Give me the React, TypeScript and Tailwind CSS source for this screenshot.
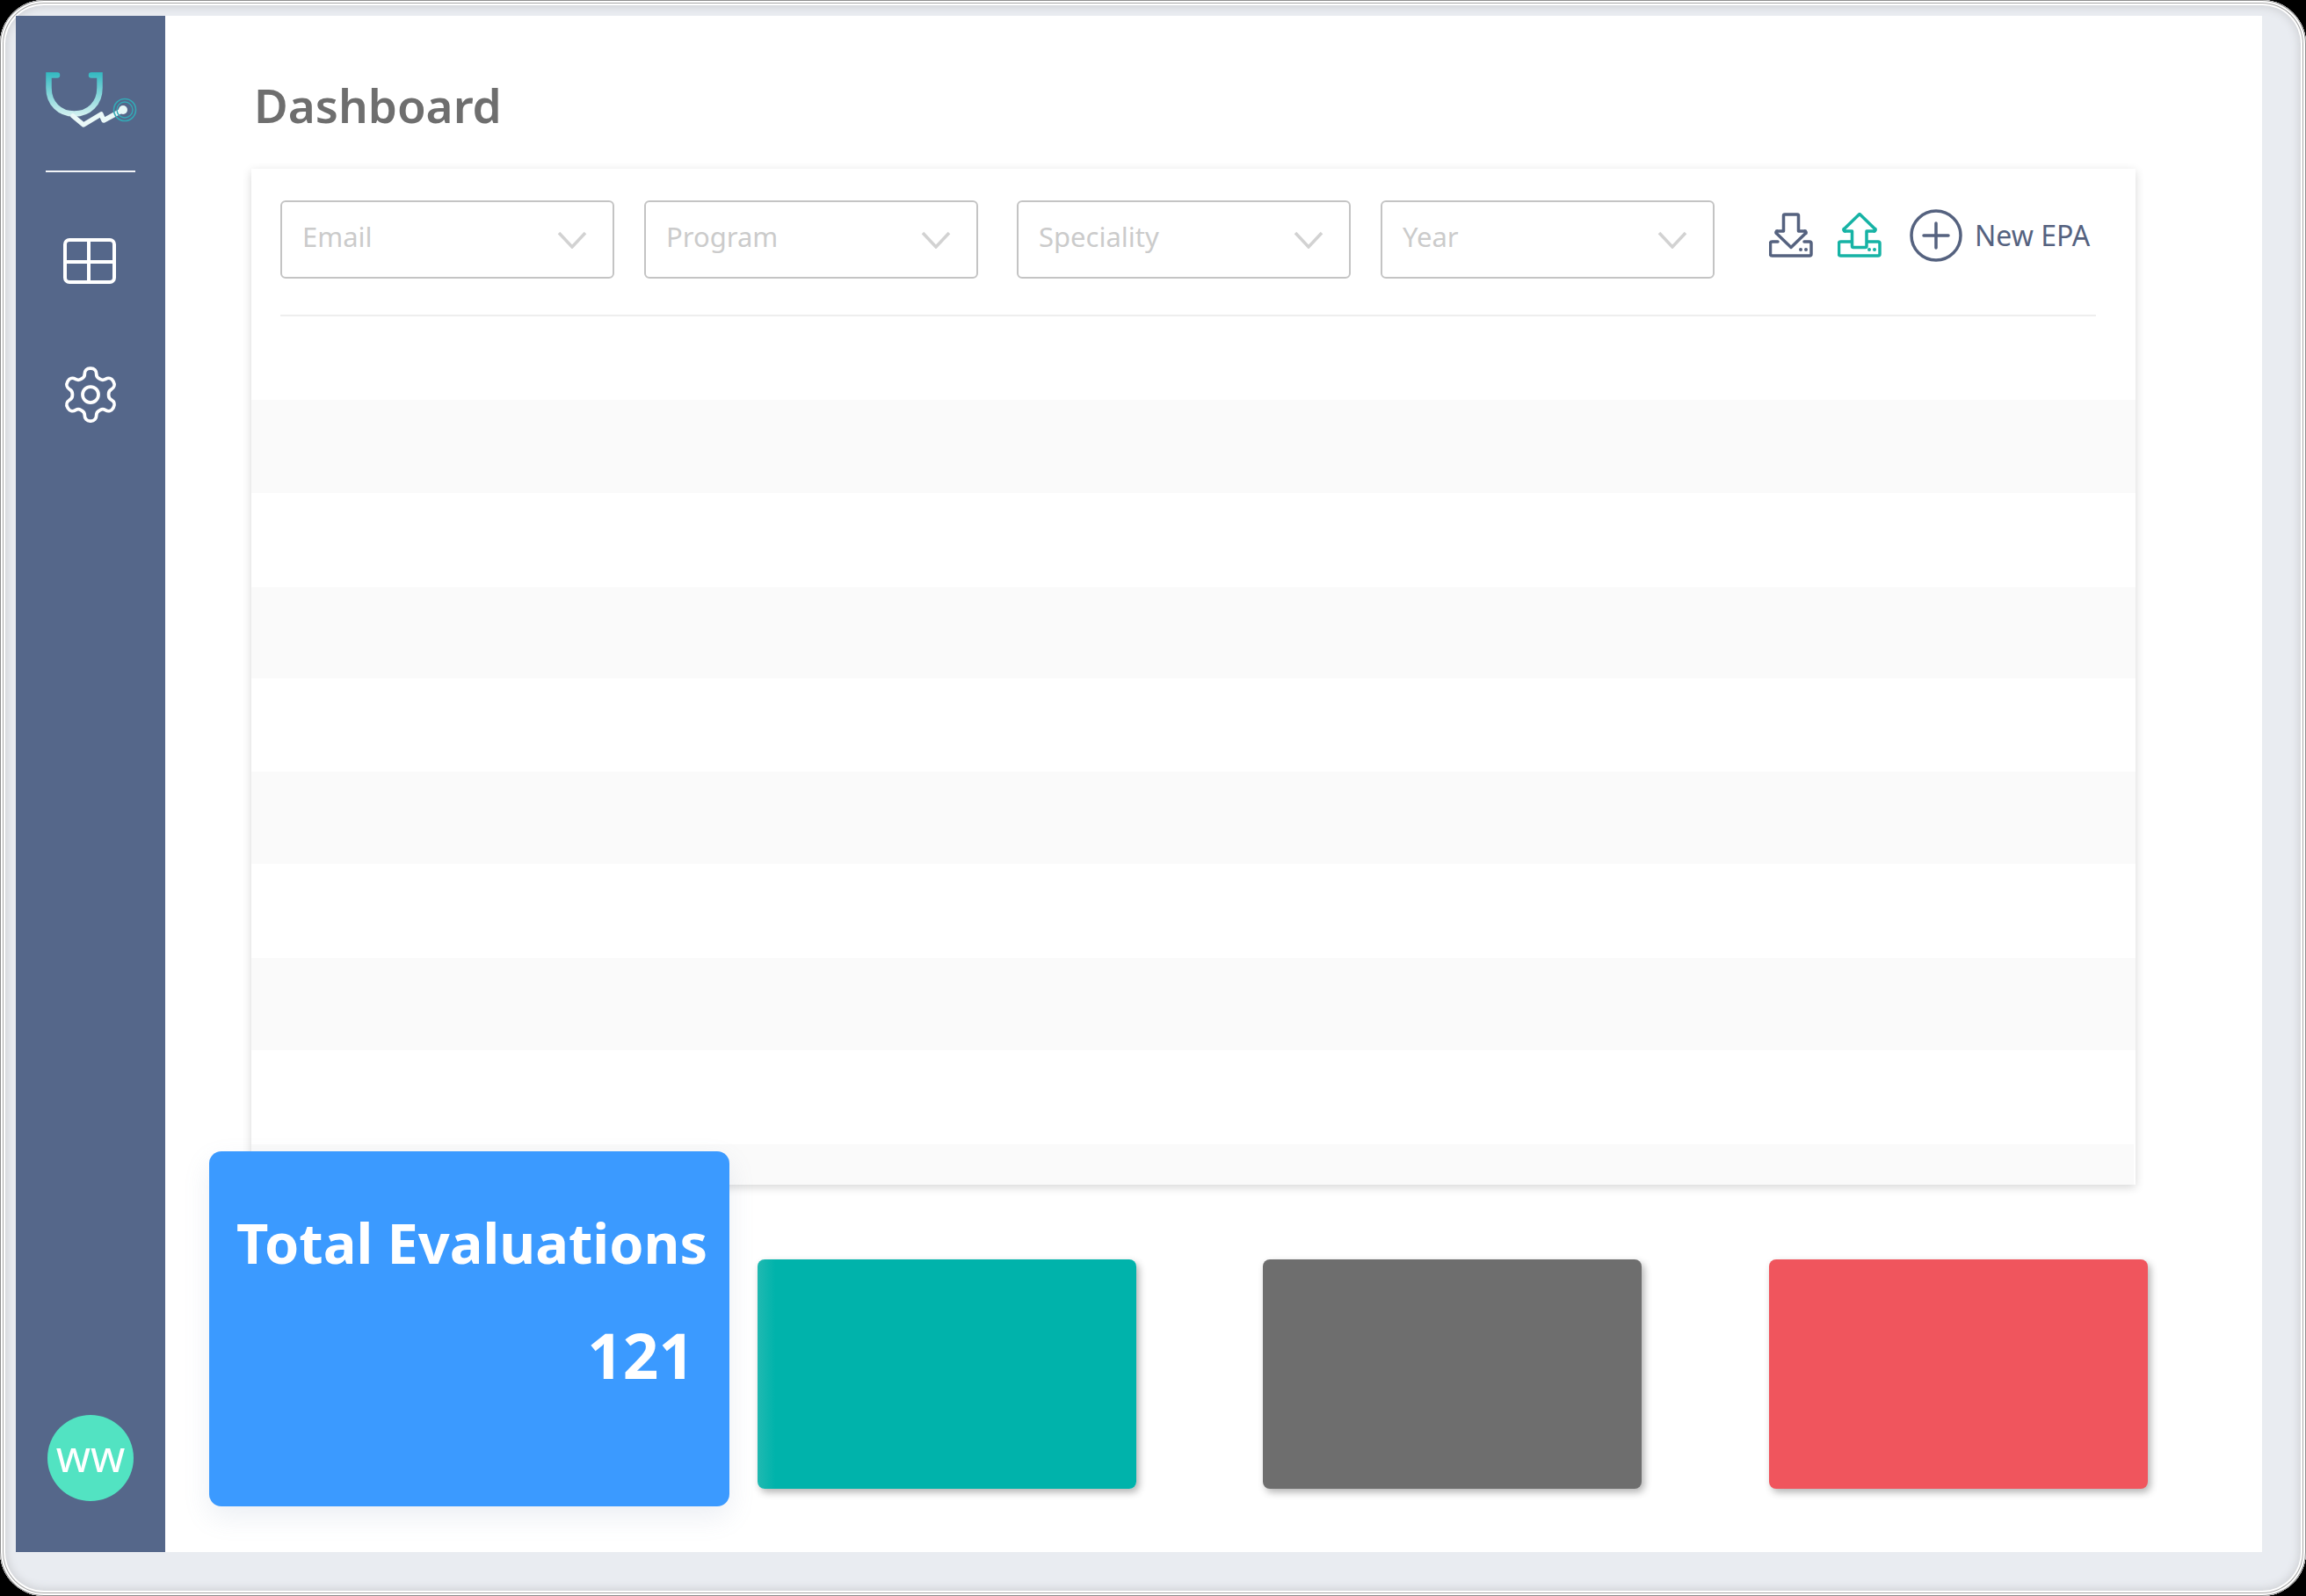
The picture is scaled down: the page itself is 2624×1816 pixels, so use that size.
const font = { fontFamily: '"Noto Sans", sans-serif' };

function Select({ label, className }: { label: string; className: string }) {
  return (
    <div className={`flex h-[89px] w-[380px] items-center justify-between rounded-[6px] border-2 border-[#c4c4c4] bg-white pl-[23px] pr-[29px] ${className}`}>
      <span className="text-[31px] leading-none text-[#cbcbcb] -mt-[6px]">{label}</span>
      <svg width="34" height="20" viewBox="0 0 34 20" fill="none" stroke="#d2d2d2" strokeWidth="3.5"><path d="M2 2 L17 18 L32 2" /></svg>
    </div>
  );
}

function Tray({ color, up }: { color: string; up?: boolean }) {
  return (
    <svg width="50" height="51" viewBox="0 0 50 51" fill="none" stroke={color} strokeWidth="3.5" strokeLinejoin="round" strokeLinecap="round">
      {up ? (
        <>
          <path d="M15 33 H3.5 a2 2 0 0 0 -2 2 V47 a2 2 0 0 0 2 2 H46 a2 2 0 0 0 2 -2 V35 a2 2 0 0 0 -2 -2 H34" />
          <path d="M25 1.5 L42 18 a1.5 1.5 0 0 1 -1 3 H33 V38 a1.5 1.5 0 0 1 -1.5 1.5 H18 a1.5 1.5 0 0 1 -1.5 -1.5 V21 H9 a1.5 1.5 0 0 1 -1 -3 Z" />
        </>
      ) : (
        <>
          <path d="M10 33 H3.5 a2 2 0 0 0 -2 2 V47 a2 2 0 0 0 2 2 H46 a2 2 0 0 0 2 -2 V35 a2 2 0 0 0 -2 -2 H40" />
          <path d="M18 2 H32 a1.5 1.5 0 0 1 1.5 1.5 V21 H40 a1.5 1.5 0 0 1 1 3 L25 39.5 L9 24 a1.5 1.5 0 0 1 1 -3 H16.5 V3.5 A1.5 1.5 0 0 1 18 2 Z" />
        </>
      )}
      <circle cx="36" cy="42" r="2" fill={color} stroke="none" />
      <circle cx="42" cy="42" r="2" fill={color} stroke="none" />
    </svg>
  );
}

function Logo() {
  return (
    <svg width="106" height="66" viewBox="0 0 106 66" fill="none">
      <defs>
        <linearGradient id="lc" gradientUnits="userSpaceOnUse" x1="0" y1="0" x2="0" y2="56">
          <stop offset="0" stopColor="#31b8c0" />
          <stop offset="1" stopColor="#e8f8f7" />
        </linearGradient>
      </defs>
      <path d="M13 3.5 H3.5 V18 C3.5 36 16 47.5 32.5 47.5 C49 47.5 61.5 36 61.5 18 V3.5 H52" stroke="url(#lc)" strokeWidth="6.5" strokeLinecap="round" />
      <path d="M31 50 L43 60 L63 48 L66 55 L88 43" stroke="#eaf8f8" strokeWidth="5.5" strokeLinejoin="round" strokeLinecap="round" />
      <circle cx="90" cy="43" r="12.5" stroke="#34a9b6" strokeWidth="1.6" />
      <circle cx="90" cy="43" r="9" stroke="#34a9b6" strokeWidth="1.4" />
      <circle cx="88" cy="43" r="5" fill="#e8f8f7" />
    </svg>
  );
}

export default function App() {
  const rows = [95, 106, 107, 104, 106, 105, 107, 105, 107, 46];
  return (
    <div className="h-[1816px] w-[2624px] overflow-hidden bg-black" style={font}>
      <div className="flex h-full w-full rounded-[50px] bg-[#e9ecf1] pb-[50px] pl-[18px] pr-[50px] pt-[18px] shadow-[inset_0_0_0_1px_#8f8f8f,inset_0_0_0_3px_#ffffff,inset_0_0_0_4px_#a8a8a8,inset_0_0_0_6px_#ffffff,inset_0_0_8px_9px_#d3d5d9]">
        <aside className="flex w-[170px] shrink-0 flex-col items-center bg-[#55678a]">
          <div className="mt-[64px] ml-[4px] h-[66px]"><Logo /></div>
          <div className="mt-[46px] h-[2px] w-[102px] bg-[#f2f4f7]" />
          <svg className="mt-[75px] -ml-[2px]" width="60" height="52" viewBox="0 0 60 52" fill="none" stroke="#ffffff" strokeWidth="4">
            <rect x="2" y="2" width="56" height="48" rx="5" />
            <path d="M29 2 V50 M2 27 H58" />
          </svg>
          <svg className="mt-[90px]" width="72" height="72" viewBox="0 0 24 24" fill="none" stroke="#ffffff" strokeWidth="1.25" strokeLinecap="round" strokeLinejoin="round">
            <path d="M12.22 2h-.44a2 2 0 0 0-2 2v.18a2 2 0 0 1-1 1.73l-.43.25a2 2 0 0 1-2 0l-.15-.08a2 2 0 0 0-2.73.73l-.22.38a2 2 0 0 0 .73 2.73l.15.1a2 2 0 0 1 1 1.72v.51a2 2 0 0 1-1 1.74l-.15.09a2 2 0 0 0-.73 2.73l.22.38a2 2 0 0 0 2.73.73l.15-.08a2 2 0 0 1 2 0l.43.25a2 2 0 0 1 1 1.73V20a2 2 0 0 0 2 2h.44a2 2 0 0 0 2-2v-.18a2 2 0 0 1 1-1.73l.43-.25a2 2 0 0 1 2 0l.15.08a2 2 0 0 0 2.73-.73l.22-.39a2 2 0 0 0-.73-2.73l-.15-.08a2 2 0 0 1-1-1.74v-.5a2 2 0 0 1 1-1.74l.15-.09a2 2 0 0 0 .73-2.73l-.22-.38a2 2 0 0 0-2.73-.73l-.15.08a2 2 0 0 1-2 0l-.43-.25a2 2 0 0 1-1-1.73V4a2 2 0 0 0-2-2z" />
            <circle cx="12" cy="12" r="3" />
          </svg>
          <div className="mt-auto mb-[58px] flex h-[98px] w-[98px] items-center justify-center rounded-full bg-[#52e3c2] text-[50px] leading-none text-white">
            <span className="-mt-[6px]">ww</span>
          </div>
        </aside>
        <main className="flex min-w-0 flex-1 flex-col bg-white pl-[98px]">
          <h1 className="ml-[3px] mt-[70px] h-[104px] text-[53px] font-semibold leading-[64px] text-[#6e6e6e]">Dashboard</h1>
          <section className="h-[1156px] w-[2144px] shadow-[0_3px_10px_rgba(0,0,0,0.16)]">
            <div className="flex h-[168px] flex-col pl-[33px] pr-[45px]">
              <div className="flex h-[168px] items-start border-b-2 border-[#eeeeee] pt-[36px]">
                <Select label="Email" className="mr-[34px]" />
                <Select label="Program" className="mr-[44px]" />
                <Select label="Speciality" className="mr-[34px]" />
                <Select label="Year" className="mr-[62px]" />
                <div className="mt-[14px]"><Tray color="#55627f" /></div>
                <div className="ml-[28px] mt-[14px]"><Tray color="#16b3a5" up /></div>
                <svg className="ml-[32px] mt-[10px]" width="60" height="60" viewBox="0 0 60 60" fill="none" stroke="#55627f" strokeWidth="3.5" strokeLinecap="round">
                  <circle cx="30" cy="30" r="28" />
                  <path d="M30 16 V44 M16 30 H44" />
                </svg>
                <span className="ml-[14px] mt-[20px] whitespace-nowrap text-[32px] leading-[40px] text-[#55627f]">New EPA</span>
              </div>
            </div>
            <div className="flex flex-col">
              {rows.map((h, i) => (
                <div key={i} className={i % 2 === 1 ? (i === 9 ? 'mr-[2px] bg-[#fafafa]' : 'bg-[#fafafa]') : 'bg-white'} style={{ height: h }} />
              ))}
            </div>
          </section>
          <div className="relative -ml-[48px] -mt-[38px] flex items-start">
            <div className="h-[404px] w-[592px] shrink-0 rounded-[14px] bg-[#3b9aff] pl-[31px] pr-[40px] pt-[64px] text-white shadow-[0_12px_30px_rgba(120,140,180,0.14)]">
              <div className="whitespace-nowrap text-[63px] font-bold leading-[80px]">Total Evaluations</div>
              <div className="mt-[48px] text-right text-[71px] font-bold leading-[80px]">121</div>
            </div>
            <div className="ml-[32px] mt-[123px] h-[261px] w-[431px] rounded-[8px] bg-[linear-gradient(90deg,#20b9b1_0,#00b3ab_20px)] shadow-[3px_4px_8px_rgba(0,0,0,0.3)]" />
            <div className="ml-[144px] mt-[123px] h-[261px] w-[431px] rounded-[8px] bg-[#6e6e6e] shadow-[3px_4px_8px_rgba(0,0,0,0.3)]" />
            <div className="ml-[145px] mt-[123px] h-[261px] w-[431px] rounded-[8px] bg-[#f0555d] shadow-[3px_4px_8px_rgba(0,0,0,0.3)]" />
          </div>
        </main>
      </div>
    </div>
  );
}
